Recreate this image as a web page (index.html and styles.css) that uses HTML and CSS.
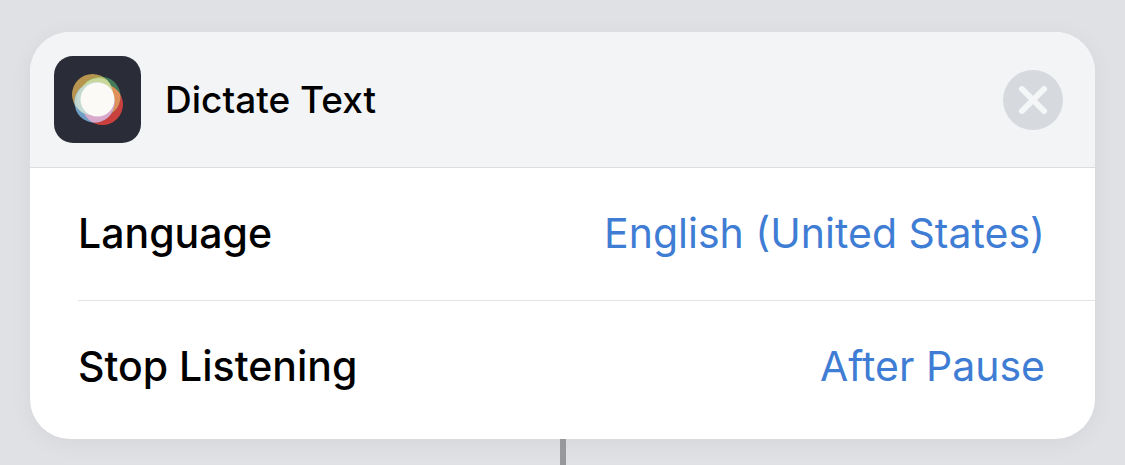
FILE: index.html
```html
<!DOCTYPE html>
<html lang="en">
<head>
<meta charset="utf-8">
<meta name="viewport" content="width=device-width, initial-scale=1">
<title>Dictate Text</title>
<link rel="stylesheet" href="styles.css">
</head>
<body>
<main class="workflow">
  <section class="card">
    <header class="card-header">
      <svg class="app-icon" viewBox="0 0 87 87" aria-hidden="true">
        <defs>
          <clipPath id="gold"><circle cx="38.5" cy="38.5" r="20.5"/></clipPath>
          <clipPath id="red"><circle cx="48.5" cy="48.5" r="20.5"/></clipPath>
        </defs>
        <rect width="87" height="87" rx="19" fill="#2a2c37"/>
        <circle cx="38.5" cy="38.5" r="20.5" fill="#b8954f"/>
        <circle cx="48.5" cy="48.5" r="20.5" fill="#c9403f"/>
        <circle cx="46.5" cy="40.5" r="20" fill="#447b5b"/>
        <circle cx="46.5" cy="40.5" r="20" fill="#b0b962" clip-path="url(#gold)"/>
        <circle cx="46.5" cy="40.5" r="20" fill="#e0915a" clip-path="url(#red)"/>
        <circle cx="40.5" cy="46.5" r="20" fill="#6f9fc4"/>
        <circle cx="40.5" cy="46.5" r="20" fill="#d9a9cc" clip-path="url(#red)"/>
        <circle cx="40.5" cy="46.5" r="20" fill="#bdd3cb" clip-path="url(#gold)"/>
        <g clip-path="url(#gold)">
          <circle cx="45" cy="42" r="20" fill="#c9d89a"/>
          <circle cx="42" cy="45" r="19" fill="#c4dad3"/>
        </g>
        <circle cx="43.5" cy="43.5" r="17" fill="#fbfaf6"/>
      </svg>
      <h1 class="title">Dictate Text</h1>
      <button class="close" type="button" aria-label="Remove action">
        <svg class="close-icon" viewBox="0 0 60 60" aria-hidden="true">
          <path d="M19 19 41 41M41 19 19 41" fill="none" stroke="#f5f6f7" stroke-width="6" stroke-linecap="round"/>
        </svg>
      </button>
    </header>
    <div class="rows">
      <div class="row">
        <span class="label" id="language">Language</span>
        <button class="value" type="button" aria-describedby="language">English (United States)</button>
      </div>
      <div class="row">
        <span class="label" id="stop">Stop Listening</span>
        <button class="value" type="button" aria-describedby="stop">After Pause</button>
      </div>
    </div>
  </section>
  <div class="connector"></div>
</main>
</body>
</html>
```
FILE: styles.css
```css
* { box-sizing: border-box; }
body {
  margin: 0;
  background: #e0e1e5;
  color: #000;
  font-family: Inter, "Liberation Sans", sans-serif;
}
.workflow {
  display: flex;
  flex-direction: column;
  min-height: 100vh;
  padding: 32px 30px 0;
}
.card {
  overflow: hidden;
  border-radius: 40px;
  background: #fff;
  box-shadow: 0 4px 24px rgba(0, 0, 0, .05);
}
.card-header {
  display: flex;
  align-items: center;
  gap: 24px;
  padding: 24px 32px 24px 24px;
  border-bottom: 1px solid #dcdde0;
  background: #f3f4f6;
}
.app-icon { width: 87px; height: 87px; flex: none; }
.title {
  flex: 1;
  margin: 0;
  font-size: 37px;
  font-weight: 500;
  line-height: 44px;
}
.close {
  width: 60px;
  height: 60px;
  padding: 0;
  border: 0;
  border-radius: 50%;
  background: #d6d9dd;
}
.close-icon { display: block; width: 60px; height: 60px; }
.rows { padding-left: 48px; }
.row {
  display: flex;
  align-items: center;
  justify-content: space-between;
  gap: 24px;
  padding: 39px 50px 41px 0;
  font-size: 41px;
  line-height: 52px;
}
.row + .row { border-top: 1px solid #e2e3e5; padding-bottom: 47px; }
.label { font-weight: 500; }
.value {
  padding: 0;
  border: 0;
  background: none;
  color: #3f7dd5;
  font: inherit;
}
.connector {
  flex: 1;
  align-self: center;
  width: 6px;
  background: #97989c;
}
```
